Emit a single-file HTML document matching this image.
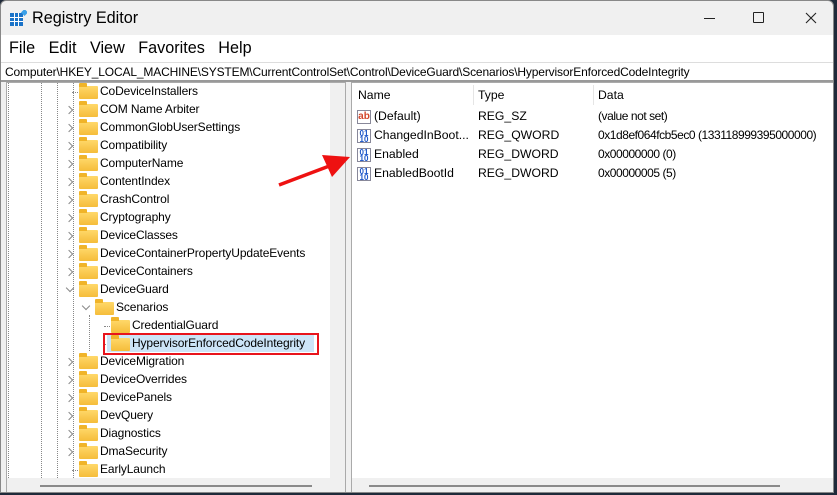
<!DOCTYPE html>
<html><head><meta charset="utf-8"><style>
*{margin:0;padding:0;box-sizing:border-box}
body{width:837px;height:495px;background:#1f2a3a;font-family:"Liberation Sans",sans-serif;overflow:hidden;position:relative}
.win{position:absolute;left:0;top:0;width:834px;height:493px;background:#f0f0f0;border:1px solid #888;border-radius:6px 6px 0 0;overflow:hidden}
.t{position:absolute;white-space:nowrap;color:#000}
.tree{position:absolute;left:5px;top:81px;width:340px;height:411px;background:#fff;border:1px solid #aaa;overflow:hidden}
.right{position:absolute;left:350px;top:81px;width:484px;height:411px;background:#fff;border:1px solid #aaa;overflow:hidden}
.fold{position:absolute;width:19px;height:13px;background:linear-gradient(#ffd86a,#f5bd3a);border-radius:1px}
.fold:before{content:"";position:absolute;left:0;top:-3px;width:8px;height:4px;background:#f0b429;border-radius:1px 1px 0 0}
.chev{position:absolute;width:6px;height:6px;border-right:1.5px solid #888;border-bottom:1.5px solid #888}
.vd{position:absolute;top:0;width:0;border-left:1px dotted #888}
.ic{position:absolute;width:14px;height:14px;border:1px solid #889;background:#fff;font-size:8px;font-weight:bold;line-height:6px;text-align:center}
</style></head><body>
<div class="win">
 <svg style="position:absolute;left:9px;top:9px" width="17" height="16"><rect x="0" y="3" width="13" height="13" fill="#1a73c8"/><g stroke="#fff" stroke-width="1"><line x1="4.5" y1="3" x2="4.5" y2="16"/><line x1="8.5" y1="3" x2="8.5" y2="16"/><line x1="0" y1="7.5" x2="13" y2="7.5"/><line x1="0" y1="11.5" x2="13" y2="11.5"/></g><rect x="12" y="0" width="5" height="5" fill="#3aa0e8" transform="rotate(45 14.5 2.5)"/></svg>
 <div class="t" style="left:31px;top:8px;font-size:16.2px">Registry Editor</div>
 <div style="position:absolute;left:703px;top:17px;width:11px;height:1px;background:#222"></div>
 <div style="position:absolute;left:752px;top:11px;width:11px;height:11px;border:1px solid #222;border-radius:1px"></div>
 <svg style="position:absolute;left:804px;top:11px" width="12" height="12"><path d="M1 1L11 11M11 1L1 11" stroke="#222" stroke-width="1.1"/></svg>
 <div style="position:absolute;left:0;top:34px;width:834px;height:27px;background:#fff"></div>
 <div class="t" style="left:8px;top:38px;font-size:16.2px">File&nbsp;&nbsp; Edit&nbsp;&nbsp; View&nbsp;&nbsp; Favorites&nbsp;&nbsp; Help</div>
 <div style="position:absolute;left:0;top:61px;width:834px;height:20px;background:#fff;border-top:1px solid #ddd;border-bottom:2px solid #999"></div>
 <div class="t" style="left:4px;top:64px;font-size:12px;letter-spacing:-0.15px">Computer\HKEY_LOCAL_MACHINE\SYSTEM\CurrentControlSet\Control\DeviceGuard\Scenarios\HypervisorEnforcedCodeIntegrity</div>

 <div class="tree">
  <div class="vd" style="left:1px;height:395px"></div>
  <div class="vd" style="left:34px;height:395px"></div>
  <div class="vd" style="left:50px;height:395px"></div>
  <div class="vd" style="left:66px;top:0;height:395px"></div>
  <div class="vd" style="left:82px;top:232px;height:36px"></div>
  <div style="position:absolute;left:323px;top:0;width:15px;height:395px;background:#f0f0f0"></div>
  <div style="position:absolute;left:0;top:395px;width:338px;height:15px;background:#f0f0f0"></div>
  <div style="position:absolute;left:33px;top:402px;width:272px;height:2px;background:#8a8a8a"></div>
 </div>

 <div class="right">
  <div style="position:absolute;left:121px;top:2px;width:1px;height:20px;background:#e5e5e5"></div>
  <div style="position:absolute;left:241px;top:2px;width:1px;height:20px;background:#e5e5e5"></div>
  <div style="position:absolute;left:0;top:395px;width:484px;height:15px;background:#f0f0f0"></div>
  <div style="position:absolute;left:17px;top:402px;width:411px;height:2px;background:#8a8a8a"></div>
 </div>
 <div style="position:absolute;left:345px;top:81px;width:5px;height:411px;background:#f0f0f0"></div>
</div>
<div id="x"></div>
<script>
var names=["CoDeviceInstallers","COM Name Arbiter","CommonGlobUserSettings","Compatibility","ComputerName","ContentIndex","CrashControl","Cryptography","DeviceClasses","DeviceContainerPropertyUpdateEvents","DeviceContainers","DeviceGuard","Scenarios","CredentialGuard","HypervisorEnforcedCodeIntegrity","DeviceMigration","DeviceOverrides","DevicePanels","DevQuery","Diagnostics","DmaSecurity","EarlyLaunch"];
var h="";
names.forEach(function(n,i){
 var y=92+i*18, lvl=(i==12?1:(i==13||i==14)?2:0), fx=79+lvl*16, tx=100+lvl*16;
 var chev=(i==0||i==21||i==13||i==14)?"none":(i==11||i==12)?"down":"right";
 if(chev=="right") h+='<div class="chev" style="left:66px;top:'+(y-3)+'px;transform:rotate(-45deg)"></div>';
 if(chev=="down") h+='<div class="chev" style="left:'+(67+lvl*16)+'px;top:'+(y-5)+'px;transform:rotate(45deg)"></div>';
 if(chev=="none"){h+='<div style="position:absolute;left:'+(72+lvl*16)+'px;top:'+y+'px;width:6px;border-top:1px dotted #888"></div>';}
 if(i==14){h+='<div style="position:absolute;left:103px;top:'+(y-11)+'px;width:216px;height:22px;border:2px solid #e8141c"></div><div style="position:absolute;left:107px;top:'+(y-9)+'px;width:207px;height:17px;background:#cce4f7"></div>';}
 h+='<div class="fold" style="left:'+fx+'px;top:'+(y-6)+'px"></div>';
 h+='<div class="t" style="left:'+tx+'px;top:'+(y-8)+'px;font-size:12px;letter-spacing:-0.12px">'+n+'</div>';
});
var rr=[["ab","(Default)","REG_SZ","(value not set)"],["01","ChangedInBoot...","REG_QWORD","0x1d8ef064fcb5ec0 (133118999395000000)"],["01","Enabled","REG_DWORD","0x00000000 (0)"],["01","EnabledBootId","REG_DWORD","0x00000005 (5)"]];
h+='<div class="t" style="left:358px;top:88px;font-size:12.2px">Name</div><div class="t" style="left:478px;top:88px;font-size:12.2px">Type</div><div class="t" style="left:598px;top:88px;font-size:12.2px">Data</div>';
rr.forEach(function(r,i){var y=117+i*19;
 if(r[0]=="ab") h+='<div class="ic" style="left:357px;top:'+(y-7)+'px;color:#d2452a;font-size:10px;line-height:12px">ab</div>';
 else h+='<div class="ic" style="left:357px;top:'+(y-7)+'px;color:#1d57c9;padding-top:1px">01<br>10</div>';
 h+='<div class="t" style="left:374px;top:'+(y-8)+'px;font-size:12.2px">'+r[1]+'</div><div class="t" style="left:478px;top:'+(y-8)+'px;font-size:12.2px">'+r[2]+'</div><div class="t" style="left:598px;top:'+(y-8)+'px;font-size:12px;letter-spacing:-0.45px">'+r[3]+'</div>';
});
h+='<svg style="position:absolute;left:0;top:0" width="837" height="495"><line x1="279" y1="185" x2="332" y2="165" stroke="#ee1111" stroke-width="3.5"/><polygon points="350,157 322,155 332,177" fill="#ee1111"/></svg>';
document.getElementById("x").innerHTML=h;
</script>
</body></html>
